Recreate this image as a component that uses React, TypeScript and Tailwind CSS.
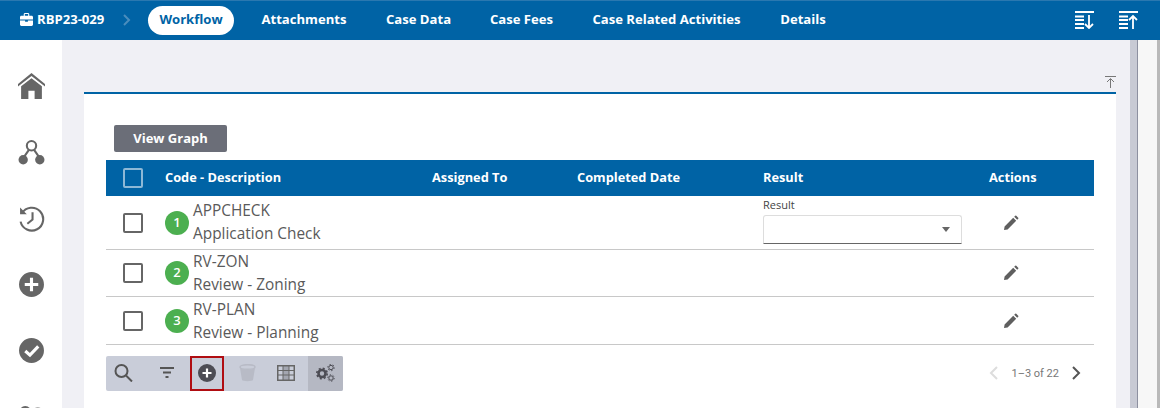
const TABS = ['Attachments', 'Case Data', 'Case Fees', 'Case Related Activities', 'Details'];
const TAB_WIDTHS = ['w-[126px]', 'w-[103px]', 'w-[103px]', 'w-[187px]', 'w-[86px]'];

const ROWS = [
  { num: 1, code: 'APPCHECK', desc: 'Application Check', height: 'h-[54px]', pad: 'pb-px', result: true },
  { num: 2, code: 'RV-ZON', desc: 'Review - Zoning', height: 'h-[47px]', pad: 'pt-0', result: false },
  { num: 3, code: 'RV-PLAN', desc: 'Review - Planning', height: 'h-[48px]', pad: 'pt-0', result: false },
];

const SortDown = () => (
  <svg width="20" height="18" viewBox="0 0 20 18" fill="none" stroke="#fff" strokeWidth="1.800">
    <path d="M0 1h19M0 5.500h9M0 9h9M0 13h9M0 17h9" />
    <path d="M14 4v13M10 13l4 4 4-4" />
  </svg>
);

const SortUp = () => (
  <svg width="20" height="18" viewBox="0 0 20 18" fill="none" stroke="#fff" strokeWidth="1.800">
    <path d="M0 1h19M0 5.500h9M0 9h9M0 13h9M0 17h9" />
    <path d="M14 18V5M10 9l4-4 4 4" />
  </svg>
);

const Pencil = () => (
  <svg width="16" height="16" viewBox="0 0 16 16" fill="#5f5f5f">
    <path d="M1 15l.6-3.600L10.200 2.800l3 3L4.600 14.400zM11.200 1.800l1-1a.8.8 0 0 1 1.100 0l1.900 1.900a.8.8 0 0 1 0 1.100l-1 1z" />
  </svg>
);

const Badge = ({ n }: { n: number }) => (
  <div className="w-6 h-6 rounded-full bg-[#4caf50] text-white text-[13px] font-semibold flex items-center justify-center shrink-0">
    {n}
  </div>
);

const Sidebar = () => (
  <div className="w-[62px] shrink-0 bg-white flex flex-col items-center overflow-hidden pt-[33px] gap-[39px]">
    <svg width="27" height="27" viewBox="0 0 26 26" fill="#666" className="shrink-0">
      <path d="M13 0L0 10.500v2.500L13 3l13 10v-2.500z" />
      <path d="M13 5L3 12.700V25h7v-8h6v8h7V12.700z" />
    </svg>
    <svg width="27" height="27" viewBox="0 0 26 26" className="shrink-0">
      <circle cx="13" cy="6.500" r="4.500" fill="none" stroke="#666" strokeWidth="2" />
      <path d="M10.500 10.500L6 17M15.500 10.500L20 17" stroke="#666" strokeWidth="2" />
      <circle cx="5" cy="20" r="4.500" fill="#666" />
      <circle cx="21" cy="20" r="4.500" fill="#666" />
    </svg>
    <svg width="27" height="27" viewBox="0 0 26 26" fill="none" stroke="#666" strokeWidth="2" className="shrink-0">
      <path d="M3.800 8A11 11 0 1 1 2.500 16" />
      <path d="M2 2.500V9h6.500" fill="#666" stroke="none" />
      <path d="M14 7v7l-5 4" />
    </svg>
    <svg width="27" height="27" viewBox="0 0 26 26" className="shrink-0">
      <circle cx="13" cy="13" r="12" fill="#666" />
      <path d="M13 6.500v13M6.500 13h13" stroke="#fff" strokeWidth="3" />
    </svg>
    <svg width="27" height="27" viewBox="0 0 26 26" className="shrink-0">
      <circle cx="13" cy="13" r="12" fill="#666" />
      <path d="M7 13.500l4.500 4L19.500 9" fill="none" stroke="#fff" strokeWidth="3" />
    </svg>
    <svg width="27" height="27" viewBox="0 0 26 26" fill="#666" className="shrink-0">
      <ellipse cx="7" cy="9" rx="6" ry="6" />
      <ellipse cx="19" cy="9" rx="5" ry="5" fill="#999" />
    </svg>
  </div>
);

const Toolbar = () => (
  <div className="h-[35px] w-[237px] bg-[#c9cdd9] rounded-[2px] flex items-center">
    <div className="w-[34px] h-full flex items-center justify-center pb-[2px]">
      <svg width="19" height="18" viewBox="0 0 19 18" fill="none" stroke="#555">
        <circle cx="7.500" cy="7" r="6" strokeWidth="2" />
        <path d="M12 11.500L18 17.500" strokeWidth="2" />
      </svg>
    </div>
    <div className="w-[50px] h-full flex items-center justify-center pb-[2px] pl-[4px]">
      <svg width="14" height="11" viewBox="0 0 14 11" fill="none" stroke="#555" strokeWidth="2">
        <path d="M0 1h14M3 5.500h8M5.500 10h3" />
      </svg>
    </div>
    <div className="w-[34px] h-full border-2 border-[#b00d12] flex items-center justify-center pb-[2px]">
      <svg width="18" height="18" viewBox="0 0 18 18">
        <circle cx="9" cy="9" r="9" fill="#4d4d55" />
        <path d="M9 4.500v9M4.500 9h9" stroke="#fff" strokeWidth="2.200" />
      </svg>
    </div>
    <div className="w-[46px] h-full flex items-center justify-center pb-[1px]">
      <svg width="17" height="18" viewBox="0 0 17 18">
        <ellipse cx="8.500" cy="3" rx="7.500" ry="2.300" fill="none" stroke="#b8bbc6" strokeWidth="1.500" />
        <path d="M1 4l2 12c.5 1.500 10.500 1.500 11 0l2-12c-3 2-12 2-15 0z" fill="#b8bbc6" />
      </svg>
    </div>
    <div className="w-[38px] h-full flex items-center justify-center pb-[2px] pr-[6px]">
      <svg width="18" height="16" viewBox="0 0 18 16">
        <rect x="6" y="1" width="6" height="14" fill="#a3a6b0" />
        <rect x="0.750" y="0.750" width="16.500" height="14.500" fill="none" stroke="#666" strokeWidth="1.500" />
        <path d="M6 1v14M12 1v14M1 5.500h16M1 10h16" stroke="#666" strokeWidth="1" />
      </svg>
    </div>
    <div className="flex-1 h-full bg-[#b5b8c3] rounded-r-[2px] flex items-center justify-center pb-[2px]">
      <svg width="19" height="18" viewBox="0 0 19 18" fill="none" stroke="#4d4d55">
        <circle cx="6" cy="9.500" r="3.500" strokeWidth="2.600" />
        <circle cx="6" cy="9.500" r="5.200" strokeWidth="1.600" strokeDasharray="2 2.100" />
        <circle cx="15" cy="3.500" r="2.200" strokeWidth="1" />
        <circle cx="15" cy="3.500" r="3.200" strokeWidth="1" strokeDasharray="1.500 1.800" />
        <circle cx="15" cy="14" r="2.200" strokeWidth="1" />
        <circle cx="15" cy="14" r="3.200" strokeWidth="1" strokeDasharray="1.500 1.800" />
      </svg>
    </div>
  </div>
);

export default function App() {
  return (
    <div className="w-[1160px] h-[408px] overflow-hidden flex flex-col font-['Open_Sans',sans-serif] bg-[#f0f0f5]">
      <header className="h-10 shrink-0 bg-[#0063a5] border-t border-[#2a78b0] flex items-center text-white text-[13.1px] font-bold">
        <div className="flex items-center pl-5 w-[148px] shrink-0 -mt-px">
          <svg width="13" height="13" viewBox="0 0 14 14" fill="#fff" className="mr-[4px]">
            <path d="M4 3V1.500C4 .7 4.700 0 5.500 0h3C9.300 0 10 .7 10 1.500V3h2.500c.8 0 1.500.7 1.500 1.500V7H0V4.500C0 3.700.7 3 1.500 3zM5.200 3h3.600V1.200H5.200zM0 8h5.500v1.500h3V8H14v4.500c0 .8-.7 1.500-1.500 1.500h-11C.7 14 0 13.300 0 12.500z" />
          </svg>
          <span>RBP23-029</span>
          <svg width="8" height="12" viewBox="0 0 8 12" fill="none" stroke="#4a8dbd" strokeWidth="2" className="ml-[19px]">
            <path d="M1 1l5 5-5 5" />
          </svg>
        </div>
        <div className="w-[86px] h-[29px] shrink-0 rounded-full bg-white text-[#0063a5] flex items-center justify-center -mt-px mr-[7px]">
          Workflow
        </div>
        {TABS.map((tab, i) => (
          <div key={tab} className={`${TAB_WIDTHS[i]} shrink-0 text-center -mt-px`}>
            {tab}
          </div>
        ))}
        <div className="ml-auto flex items-center gap-6 pr-[21px] -mt-[1px]">
          <SortDown />
          <SortUp />
        </div>
      </header>

      <div className="flex-1 flex min-h-0">
        <Sidebar />
        <div className="flex-1 min-w-0 flex">
          <main className="w-[1068px] shrink-0 pl-[22px] pr-[14px] pt-[36px]">
            <div className="h-3 flex justify-end mb-[4px]">
              <svg width="11" height="12" viewBox="0 0 11 12" fill="none" stroke="#777" strokeWidth="1">
                <path d="M0 .5h11M5.500 12V3M2 6l3.500-3.500L9 6" />
              </svg>
            </div>
            <section className="bg-white border-t-2 border-[#0063a5] h-[400px] px-[22px] pt-[31px]">
              <button className="w-[113px] h-[27px] pt-px bg-[#6b6e78] rounded-[2px] text-white text-[13px] font-bold block ml-2">
                View Graph
              </button>
              <div className="mt-2 h-9 bg-[#0063a5] text-white text-[12.8px] font-bold grid grid-cols-[59px_267px_145px_186px_226px_1fr] items-center">
                <div className="pl-[17px]">
                  <div className="w-5 h-5 rounded-[2px] border-2 border-[#8db8d6]" />
                </div>
                <div>Code - Description</div>
                <div>Assigned To</div>
                <div>Completed Date</div>
                <div>Result</div>
                <div>Actions</div>
              </div>
              {ROWS.map((row) => (
                <div
                  key={row.num}
                  className={`${row.height} border-b border-[#c8c8c8] grid grid-cols-[59px_598px_226px_1fr] items-center text-[#5a5a5a]`}
                >
                  <div className="pl-[17px]">
                    <div className="w-5 h-5 rounded-[2px] border-2 border-[#666]" />
                  </div>
                  <div className="flex items-center gap-1">
                    <Badge n={row.num} />
                    <div className={`text-[15.4px] leading-[23px] ${row.pad} w-[240px]`}>
                      <div>{row.code}</div>
                      <div>{row.desc}</div>
                    </div>
                  </div>
                  <div className="self-start pt-px">
                    {row.result && (
                      <div className="w-[199px]">
                        <div className="text-[11px] leading-[15px] mb-[3px] text-[#444]">Result</div>
                        <div className="h-[29px] border border-[#ddd] border-b-[#666] rounded-t-[3px] flex items-center justify-end pr-[11px]">
                          <div className="w-0 h-0 border-x-[4px] border-x-transparent border-t-[5px] border-t-[#666]" />
                        </div>
                      </div>
                    )}
                  </div>
                  <div className="pl-[14px]">
                    <Pencil />
                  </div>
                </div>
              ))}
              <div className="mt-[11px] flex items-center">
                <Toolbar />
                <div className="ml-auto flex items-center pr-[13px] pb-px text-[11px] text-[#777] font-['Roboto',sans-serif]">
                  <svg width="9" height="14" viewBox="0 0 9 14" fill="none" stroke="#ddd" strokeWidth="2">
                    <path d="M8 1L2 7l6 6" />
                  </svg>
                  <span className="ml-[13px] mr-[13px] mt-[2px]">1–3 of 22</span>
                  <svg width="9" height="14" viewBox="0 0 9 14" fill="none" stroke="#555" strokeWidth="2">
                    <path d="M1 1l6 6-6 6" />
                  </svg>
                </div>
              </div>
            </section>
          </main>
          <div className="w-[8px] bg-[#c8cad4] border-r border-[#8d90a0] shrink-0" />
          <div className="w-[19px] bg-[#f7f7f7] shrink-0" />
          <div className="w-[3px] bg-[#b9b9b9] shrink-0" />
        </div>
      </div>
    </div>
  );
}
